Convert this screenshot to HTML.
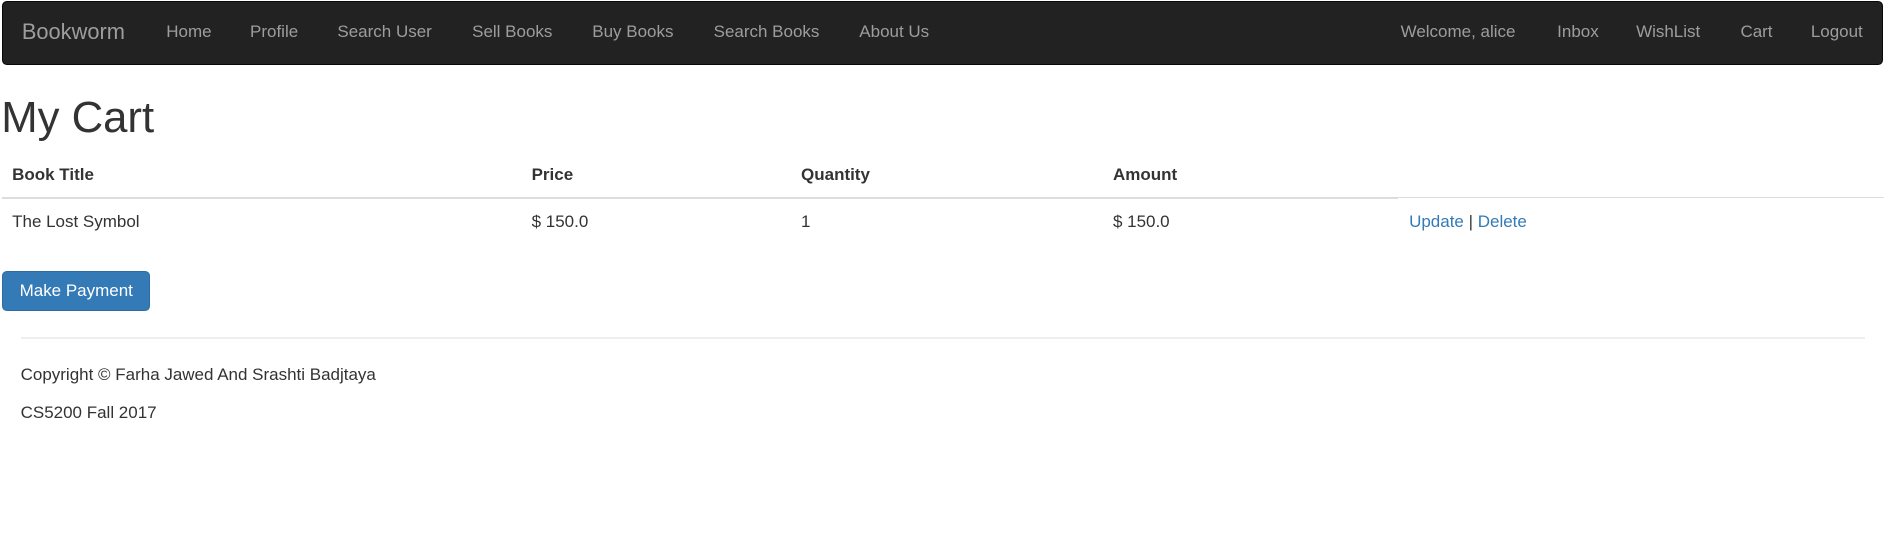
<!DOCTYPE html>
<html><head><meta charset="utf-8"><style>
html,body{margin:0;padding:0;background:#fff;width:1903px;height:559px;overflow:hidden}
#w{position:relative;width:1568px;height:461px;zoom:1.2137;font-family:"Liberation Sans",Arial,sans-serif;font-size:14px;color:#333}
.a{position:absolute;white-space:nowrap}
#nav{position:absolute;left:2px;top:1px;width:1548px;height:51px;background:#222;border:1px solid #080808;border-radius:4px}
.n{position:absolute;top:26px;color:#9d9d9d;font-size:14px;transform:translateY(-50%)}
.th{font-weight:bold;top:136px}
.td{top:175px}
a{color:#337ab7;text-decoration:none}
</style></head><body><div id="w">
<div id="nav"></div>
<div class="n" style="left:18px;font-size:18px">Bookworm</div>
<div class="n" style="left:137px">Home</div>
<div class="n" style="left:206px">Profile</div>
<div class="n" style="left:278px">Search User</div>
<div class="n" style="left:389px">Sell Books</div>
<div class="n" style="left:488px">Buy Books</div>
<div class="n" style="left:588px">Search Books</div>
<div class="n" style="left:708px">About Us</div>
<div class="n" style="left:1154px">Welcome, alice</div>
<div class="n" style="left:1283px">Inbox</div>
<div class="n" style="left:1348px">WishList</div>
<div class="n" style="left:1434px">Cart</div>
<div class="n" style="left:1492px">Logout</div>
<div class="a" style="left:1px;top:77px;font-size:36px;line-height:42px">My Cart</div>
<div class="a th" style="left:10px">Book Title</div>
<div class="a th" style="left:438px">Price</div>
<div class="a th" style="left:660px">Quantity</div>
<div class="a th" style="left:917px">Amount</div>
<div class="a" style="left:2px;top:162px;width:1150px;height:2px;background:#ddd"></div>
<div class="a" style="left:1152px;top:162px;width:400px;height:1px;background:#ddd"></div>
<div class="a td" style="left:10px">The Lost Symbol</div>
<div class="a td" style="left:438px">$ 150.0</div>
<div class="a td" style="left:660px">1</div>
<div class="a td" style="left:917px">$ 150.0</div>
<div class="a td" style="left:1161px"><a>Update</a> | <a>Delete</a></div>
<div class="a" style="left:2px;top:223px;width:120px;height:32px;background:#337ab7;border:1px solid #2e6da4;border-radius:4px;color:#fff;line-height:32px;text-align:center">Make Payment</div>
<div class="a" style="left:17px;top:278px;width:1520px;height:1px;background:#eee"></div>
<div class="a" style="left:17px;top:301px">Copyright © Farha Jawed And Srashti Badjtaya</div>
<div class="a" style="left:17px;top:332px">CS5200 Fall 2017</div>
</div></body></html>
